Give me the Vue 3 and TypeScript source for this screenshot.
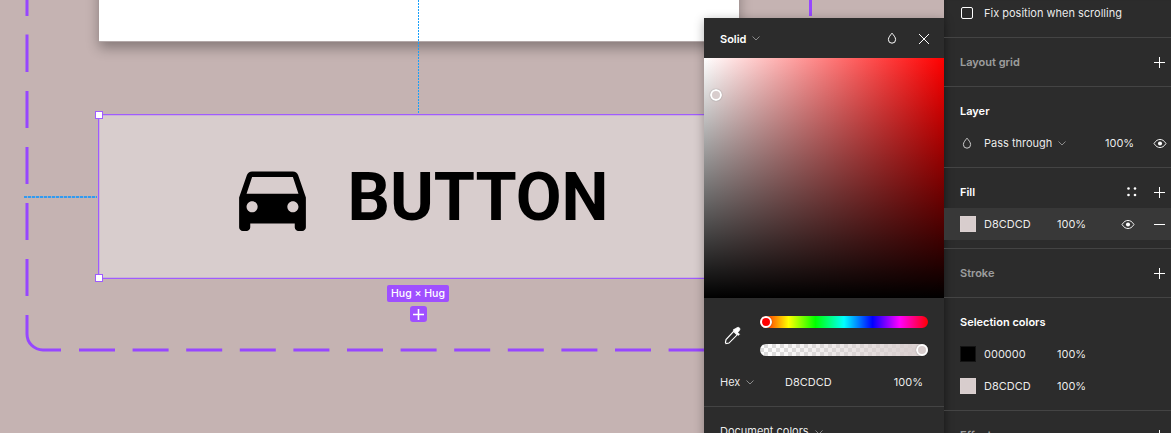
<script setup lang="ts">
interface SwatchRow {
  hex: string;
  color: string;
}

const selectionColors: SwatchRow[] = [
  { hex: "000000", color: "#000000" },
  { hex: "D8CDCD", color: "#d8cdcd" },
];

const carPath =
  "M18.92 6.01C18.72 5.42 18.16 5 17.5 5h-11c-.66 0-1.21.42-1.42 1.01L3 12v8c0 .55.45 1 1 1h1c.55 0 1-.45 1-1v-1h12v1c0 .55.45 1 1 1h1c.55 0 1-.45 1-1v-8l-2.08-5.99zM6.5 16c-.83 0-1.5-.67-1.5-1.5S5.67 13 6.5 13s1.5.67 1.5 1.5S7.33 16 6.5 16zm11 0c-.83 0-1.5-.67-1.5-1.5s.67-1.5 1.5-1.5 1.5.67 1.5 1.5-.67 1.5-1.5 1.5zM5 11l1.5-4.5h11L19 11H5z";
const dropPath = "M6 1.2 C7.6 3.2 9.6 5.2 9.6 7.6 A3.6 3.6 0 0 1 2.4 7.6 C2.4 5.2 4.4 3.2 6 1.2 Z";
const eyeOuter = "M1 6 C3 2.6 5.4 1.6 7.5 1.6 C9.6 1.6 12 2.6 14 6 C12 9.4 9.6 10.4 7.5 10.4 C5.4 10.4 3 9.4 1 6 Z";
</script>

<template>
  <div class="app">
    <main class="canvas">
      <!-- section frame -->
      <svg class="frame" width="944" height="433" fill="none" stroke="#9747ff" stroke-width="3">
        <path d="M27 16V-21M27 72V34.500M27 128V91M27 184V147M27 240V203M27 296V259" />
        <path d="M27 315V334A16 16 0 0 0 43 350H61" />
        <path d="M79 350H704" stroke-dasharray="36 17.6" />
        <path d="M810.500 0V16" />
      </svg>

      <div class="artboard"></div>

      <div class="guide guide-v"></div>
      <div class="guide guide-h"></div>

      <div class="selected">
        <svg class="car" width="89" height="89" viewBox="0 0 24 24"><path :d="carPath" /></svg>
        <span class="selected-text">BUTTON</span>
        <i class="handle handle-top"></i>
        <i class="handle handle-bottom"></i>
      </div>

      <div class="hug">Hug × Hug</div>
      <div class="add">
        <svg width="11" height="11" viewBox="0 0 11 11" stroke="#fff" stroke-width="1.600">
          <path d="M5.500 0V11M0 5.500H11" />
        </svg>
      </div>

      <!-- colour picker popup -->
      <section class="picker">
        <header class="picker-head">
          <span class="title">Solid</span>
          <svg class="chev" width="8" height="5" viewBox="0 0 8 5"><path d="M.5.5 4 4 7.500.5" /></svg>
          <svg class="drop" width="12" height="13" viewBox="0 0 12 13"><path :d="dropPath" /></svg>
          <svg class="close" width="12" height="12" viewBox="0 0 12 12"><path d="M1 1l10 10M11 1 1 11" /></svg>
        </header>

        <div class="gradient">
          <i class="sat-thumb"></i>
        </div>

        <div class="sliders">
          <svg class="dropper" width="19" height="20" viewBox="0 0 16 17" fill="none" stroke="#fff">
            <path d="M9 4.500 12 7.500 5 14.500 2.500 15 2 14l.5-2.500z" stroke-width="1" />
            <path d="M8.500 3.500l4.500 4.500 1-1-1.500-1.500 1.500-1.800a1.600 1.600 0 0 0-2.300-2.200L10 2.500 9.500 2.500z" fill="#fff" stroke-width=".6" />
          </svg>
          <div class="tracks">
            <div class="track hue"><i class="thumb thumb-hue"></i></div>
            <div class="track alpha"><i class="thumb thumb-alpha"></i></div>
          </div>
        </div>

        <div class="hex-row">
          <span class="hex-mode">Hex</span>
          <svg class="chev" width="8" height="5" viewBox="0 0 8 5"><path d="M.5.5 4 4 7.500.5" /></svg>
          <span class="hex-value">D8CDCD</span>
          <span class="hex-pct">100%</span>
        </div>

        <div class="doc-colors">
          <span>Document colors</span>
          <svg class="chev" width="8" height="5" viewBox="0 0 8 5"><path d="M.5.5 4 4 7.500.5" /></svg>
        </div>
      </section>
    </main>

    <aside class="sidebar">
      <div class="section s-fix">
        <span class="checkbox"></span>
        <span>Fix position when scrolling</span>
      </div>

      <div class="section s-grid">
        <span class="title muted">Layout grid</span>
        <svg class="plus" width="11" height="11" viewBox="0 0 11 11"><path d="M5.500 0V11M0 5.500H11" /></svg>
      </div>

      <div class="section s-layer">
        <div class="head"><span class="title">Layer</span></div>
        <div class="row">
          <svg class="layer-drop" width="12" height="13" viewBox="0 0 12 13"><path :d="dropPath" /></svg>
          <span>Pass through</span>
          <svg class="chev" width="8" height="5" viewBox="0 0 8 5"><path d="M.5.5 4 4 7.500.5" /></svg>
          <span class="layer-pct">100%</span>
          <svg class="eye" width="14" height="11" viewBox="0 0 15 12">
            <path :d="eyeOuter" fill="none" stroke="#fff" />
            <circle cx="7.500" cy="6" r="2.200" fill="#fff" />
          </svg>
        </div>
      </div>

      <div class="section s-fill">
        <div class="head">
          <span class="title">Fill</span>
          <svg class="dots" width="10" height="10" viewBox="0 0 10 10" fill="#fff">
            <circle cx="1.500" cy="1.500" r="1.300" /><circle cx="8" cy="1.500" r="1.300" />
            <circle cx="1.500" cy="8" r="1.300" /><circle cx="8" cy="8" r="1.300" />
          </svg>
          <svg class="plus" width="11" height="11" viewBox="0 0 11 11"><path d="M5.500 0V11M0 5.500H11" /></svg>
        </div>
        <div class="row fill-row">
          <span class="swatch light"></span>
          <span class="hex">D8CDCD</span>
          <span>100%</span>
          <svg class="eye fill-eye" width="14" height="11" viewBox="0 0 15 12">
            <path :d="eyeOuter" fill="none" stroke="#fff" />
            <circle cx="7.500" cy="6" r="2.200" fill="#fff" />
          </svg>
          <span class="minus"></span>
        </div>
      </div>

      <div class="section s-stroke">
        <span class="title muted">Stroke</span>
        <svg class="plus" width="11" height="11" viewBox="0 0 11 11"><path d="M5.500 0V11M0 5.500H11" /></svg>
      </div>

      <div class="section s-selection">
        <div class="head"><span class="title">Selection colors</span></div>
        <div v-for="item in selectionColors" :key="item.hex" class="row">
          <span class="swatch" :style="{ background: item.color }"></span>
          <span class="hex">{{ item.hex }}</span>
          <span>100%</span>
        </div>
      </div>

      <div class="section s-effects">
        <span class="title muted">Effects</span>
        <svg class="plus" width="11" height="11" viewBox="0 0 11 11"><path d="M5.500 0V11M0 5.500H11" /></svg>
      </div>
    </aside>
  </div>
</template>

<style>
html,
body {
  margin: 0;
  overflow: hidden;
  background: #c5b3b2;
}
</style>

<style scoped>
.app {
  display: flex;
  width: 1171px;
  height: 433px;
  overflow: hidden;
  font-family: Inter, "Liberation Sans", sans-serif;
  font-size: 11px;
  color: rgba(255, 255, 255, 0.92);
}
.canvas {
  position: relative;
  width: 944px;
  flex: none;
  background: #c5b3b2;
}
.frame {
  position: absolute;
  left: 0;
  top: 0;
}
.artboard {
  position: absolute;
  left: 99px;
  top: -40px;
  width: 640px;
  height: 81px;
  background: #fff;
  box-shadow: 0 1px 0 #b3a8a8, 0 7px 12px rgba(0, 0, 0, 0.32);
}
.guide {
  position: absolute;
}
.guide-v {
  left: 418px;
  top: 0;
  width: 1px;
  height: 114px;
  background: repeating-linear-gradient(to bottom, #18a0fb 0 2px, transparent 2px 3px);
}
.guide-h {
  left: 24px;
  top: 196px;
  width: 73px;
  height: 2px;
  background: repeating-linear-gradient(to right, rgba(24, 150, 251, 0.85) 0 3px, rgba(24, 150, 251, 0.2) 3px 4px);
}
.selected {
  position: absolute;
  left: 98px;
  top: 114px;
  width: 641px;
  height: 165px;
  box-sizing: border-box;
  border: 1px solid #9f5cff;
  box-shadow: inset 0 0 0 1px rgba(159, 92, 255, 0.25);
  background: #d8cdcd;
  display: flex;
  align-items: center;
  justify-content: center;
  gap: 30px;
  color: #000;
}
.car {
  fill: #000;
  margin-top: 1px;
}
.selected-text {
  font-family: Roboto, sans-serif;
  font-weight: 700;
  font-size: 66.5px;
  line-height: 1;
  margin-top: 2px;
}
.handle {
  position: absolute;
  left: -4px;
  width: 6px;
  height: 6px;
  background: #fff;
  border: 1px solid #9f5cff;
}
.handle-top {
  top: -4px;
}
.handle-bottom {
  bottom: -4px;
}
.hug {
  position: absolute;
  left: 387px;
  top: 285px;
  width: 62px;
  height: 17px;
  border-radius: 2px;
  background: #9f4fff;
  color: #fff;
  font-size: 10.5px;
  font-weight: 500;
  line-height: 17px;
  text-align: center;
  white-space: nowrap;
}
.add {
  position: absolute;
  left: 410px;
  top: 306px;
  width: 17px;
  height: 16px;
  border-radius: 3px;
  background: #9f4fff;
  display: flex;
  align-items: center;
  justify-content: center;
}
.picker {
  position: absolute;
  left: 704px;
  top: 18px;
  width: 240px;
  height: 440px;
  background: #2c2c2c;
  box-shadow: 0 2px 10px rgba(0, 0, 0, 0.3);
}
.picker-head {
  box-sizing: border-box;
  height: 40px;
  padding: 1px 0 0 16px;
  display: flex;
  align-items: center;
}
.title {
  font-weight: 600;
  color: #fff;
}
.muted {
  color: rgba(255, 255, 255, 0.55);
}
.chev {
  fill: none;
  stroke: rgba(255, 255, 255, 0.45);
  stroke-width: 1;
  margin-left: 6px;
}
.drop {
  fill: none;
  stroke: #fff;
  margin-left: auto;
  margin-right: 20px;
}
.close {
  fill: none;
  stroke: #fff;
  margin-right: 14px;
}
.gradient {
  position: relative;
  height: 240px;
  background: linear-gradient(to top, #000, transparent), linear-gradient(to right, #fff, #f00);
}
.sat-thumb {
  position: absolute;
  left: 6px;
  top: 31px;
  width: 8px;
  height: 8px;
  border: 2px solid #fff;
  border-radius: 50%;
  background: #d8cdcd;
  box-shadow: 0 0 1px rgba(0, 0, 0, 0.5);
}
.sliders {
  display: flex;
  align-items: center;
  height: 76px;
  padding-left: 19px;
}
.dropper {
  flex: none;
}
.tracks {
  display: flex;
  flex-direction: column;
  gap: 16px;
  margin-left: 18px;
  width: 168px;
}
.track {
  position: relative;
  height: 12px;
  border-radius: 6px;
}
.hue {
  background: linear-gradient(to right, #f00 0%, #ff0 17%, #0f0 33%, #0ff 50%, #00f 67%, #f0f 83%, #f00 100%);
}
.alpha {
  background:
    linear-gradient(to right, rgba(216, 205, 205, 0), #d8cdcd),
    repeating-conic-gradient(#dcdcdc 0 25%, #fff 0 50%) 0 0 / 8px 8px;
}
.thumb {
  position: absolute;
  top: 0;
  width: 8px;
  height: 8px;
  border: 2px solid #fff;
  border-radius: 50%;
  box-shadow: 0 0 1px rgba(0, 0, 0, 0.5);
}
.thumb-hue {
  left: 0;
  background: #f00;
}
.thumb-alpha {
  right: 0;
  background: #d8cdcd;
}
.hex-row {
  display: flex;
  align-items: center;
  height: 32px;
  padding-left: 16px;
  margin-top: -8px;
  position: relative;
}
.hex-mode {
  width: 20px;
}
.hex-value {
  position: absolute;
  left: 81px;
}
.hex-pct {
  position: absolute;
  right: 21px;
}
.doc-colors {
  margin-top: 8px;
  border-top: 1px solid #444;
  padding: 16px 16px;
  line-height: 16px;
}
.sidebar {
  width: 227px;
  flex: none;
  background: #2c2c2c;
  box-shadow: inset 5px 0 5px -4px rgba(0, 0, 0, 0.18);
}
.section {
  box-sizing: border-box;
  border-bottom: 1px solid #444;
  position: relative;
}
.s-fix {
  height: 38px;
  display: flex;
  align-items: flex-start;
  padding: 7px 0 0 17px;
  gap: 11px;
  line-height: 13px;
}
.checkbox {
  width: 10px;
  height: 10px;
  border: 1px solid #fff;
  border-radius: 2px;
}
.s-grid,
.s-stroke,
.s-effects {
  display: flex;
  align-items: center;
  justify-content: space-between;
  padding: 0 6px 0 16px;
}
.s-grid,
.s-stroke {
  height: 49px;
}
.s-layer {
  height: 81px;
}
.head {
  display: flex;
  align-items: center;
  height: 16px;
  padding: 16px 6px 0 16px;
}
.row {
  display: flex;
  align-items: center;
  height: 32px;
  padding-left: 16px;
}
.s-layer .row {
  margin-top: 8px;
}
.layer-drop {
  fill: none;
  stroke: #ccc;
  margin-left: 1px;
  margin-right: 11px;
}
.layer-pct {
  position: absolute;
  left: 161px;
}
.eye {
  position: absolute;
  right: 4px;
}
.s-fill {
  height: 81px;
}
.dots {
  margin-left: auto;
  margin-right: 17px;
}
.fill-row {
  background: #383838;
  margin-top: 8px;
}
.fill-eye {
  right: 36px;
}
.minus {
  position: absolute;
  right: 6px;
  width: 11px;
  height: 1px;
  background: #fff;
}
.swatch {
  width: 16px;
  height: 16px;
  flex: none;
  margin-right: 8px;
  box-shadow: inset 0 0 0 1px rgba(255, 255, 255, 0.08);
}
.light {
  background: #d8cdcd;
}
.hex {
  width: 73px;
}
.s-selection {
  height: 113px;
}
.s-selection .head {
  margin-bottom: 8px;
}
.s-effects {
  height: 48px;
  border-bottom: 0;
}
.plus {
  fill: none;
  stroke: #fff;
  stroke-width: 1;
  flex: none;
}
</style>
